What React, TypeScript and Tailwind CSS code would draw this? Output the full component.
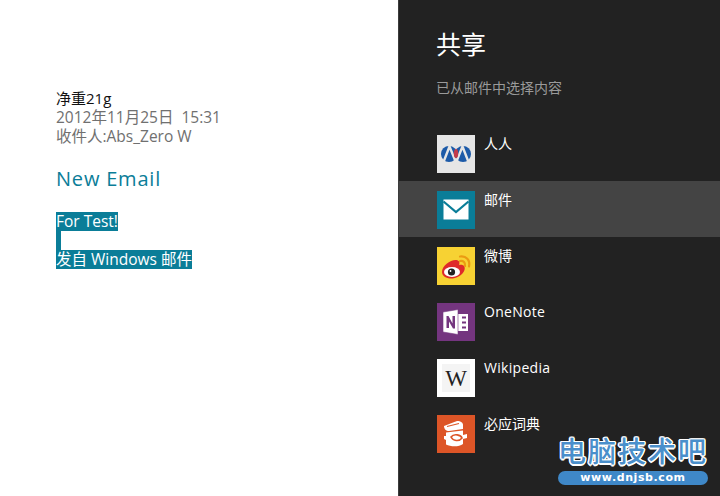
const cjk = "font-['Open_Sans','Noto_Sans_CJK_SC',sans-serif]";

function Renren() {
  return (
    <svg viewBox="0 0 38 38" className="w-full h-full">
      <rect width="38" height="38" fill="#e6e6e6" />
      <circle cx="12" cy="19" r="8" fill="#1c5aa8" />
      <circle cx="26" cy="19" r="8" fill="#1c5aa8" />
      <path d="M12.5 11.5 L6.5 27 M12.5 11.5 L19 27.5 M25.5 11.5 L19 27.5 M25.5 11.5 L31.5 27" stroke="#e6e6e6" strokeWidth="2.4" fill="none" />
      <ellipse cx="19" cy="18.5" rx="2.2" ry="4.5" fill="#c23a4a" />
    </svg>
  );
}
function Mail() {
  return (
    <svg viewBox="0 0 38 38" className="w-full h-full">
      <rect width="38" height="38" fill="#0a7d98" />
      <rect x="6.5" y="8.5" width="25" height="20" fill="#fff" />
      <path d="M6.5 10.5 L19 21 L31.5 10.5" stroke="#0a7d98" strokeWidth="2.2" fill="none" />
    </svg>
  );
}
function Weibo() {
  return (
    <svg viewBox="0 0 38 38" className="w-full h-full">
      <rect width="38" height="38" fill="#f7d233" />
      <path d="M5 25 C5 19 13 13 18.5 13 C22.5 13 23 15.5 22 18 C26.5 17 28.5 19.5 27.5 23 C26 28.5 18 32 13 31.5 C8.5 31 5 28.5 5 25 Z" fill="#df2a2a" />
      <ellipse cx="15" cy="25" rx="8" ry="5" fill="#fff" />
      <circle cx="14.5" cy="25" r="3.6" fill="#222" />
      <circle cx="13.5" cy="24" r="0.9" fill="#fff" />
      <path d="M23 14 C26.5 13.5 28.5 15.5 28 19 M23 9.5 C29 8.5 33.5 13 32 19.5" stroke="#eb9b12" strokeWidth="2.2" fill="none" strokeLinecap="round" />
    </svg>
  );
}
function OneNote() {
  return (
    <svg viewBox="0 0 38 38" className="w-full h-full">
      <rect width="38" height="38" fill="#74357f" />
      <path d="M20 11 H31 V28 H20 Z" fill="#fff" />
      <path d="M25 14.5 H29 M25 19.5 H29 M25 24.5 H29" stroke="#74357f" strokeWidth="2" />
      <path d="M6 9 L21 6.5 L21 31.5 L6 29 Z" fill="#fff" stroke="#74357f" strokeWidth="0.6" />
      <path d="M9.5 25 V13 H11.5 L15.5 20.5 V13 H18 V25.5 H16 L12 18.5 V25 Z" fill="#74357f" />
    </svg>
  );
}
function Wiki() {
  return (
    <div className="w-full h-full bg-white flex items-center justify-center">
      <div className="w-[28px] h-[28px] bg-[#f4f4f4] flex items-center justify-center text-[23px] leading-none text-[#222] font-['Liberation_Serif',serif]">
        W
      </div>
    </div>
  );
}
function Bing() {
  return (
    <svg viewBox="0 0 38 38" className="w-full h-full">
      <rect width="38" height="38" fill="#dd5527" />
      <path d="M7 11 L20 6 C24 6 26 8 26 10 L26 14 L12 16 C9 16 7 14 7 11 Z" fill="#fff" />
      <path d="M9 17.5 L26 15.5 L26 20 L30 19 L30 23 L26 24 L26 29 C22 32 14 32 9 29.5 L9 25 L7 24 L7 21 L9 21 Z" fill="#fff" />
      <path d="M14 22 C17 18 24 20 25 23 C22 27 16 26 14 22 Z" stroke="#dd5527" strokeWidth="1.6" fill="none" />
      <path d="M10 11.5 L22 8.5" stroke="#dd5527" strokeWidth="1.2" />
    </svg>
  );
}

const rows: { name: string; icon: React.ReactNode; active?: boolean; latin?: boolean }[] = [
  { name: "人人", icon: <Renren /> },
  { name: "邮件", icon: <Mail />, active: true },
  { name: "微博", icon: <Weibo /> },
  { name: "OneNote", icon: <OneNote />, latin: true },
  { name: "Wikipedia", icon: <Wiki />, latin: true },
  { name: "必应词典", icon: <Bing /> },
];

export default function App() {
  return (
    <div className={`relative w-[720px] h-[496px] overflow-hidden flex bg-white ${cjk}`}>
      <div className="w-[398px] shrink-0 pl-[56px] pt-[89px]">
        <div className="text-[15px] leading-[19px] text-[#111]">净重21g</div>
        <div className="text-[15.5px] leading-[19px] text-[#707070] whitespace-pre">2012年11月25日  15:31</div>
        <div className="text-[15.5px] leading-[19px] text-[#707070]">收件人:Abs_Zero W</div>
        <div className="mt-[19px] text-[20px] leading-[28px] tracking-[0.8px] text-[#0a7d98]">New Email</div>
        <div className="mt-[19px] text-[15.5px] leading-[19px] text-white">
          <div><span className="inline-block bg-[#0a7d98] h-[19px]">For Test!</span></div>
          <div className="w-[5px] h-[19px] bg-[#0a7d98]" />
          <div><span className="inline-block bg-[#0a7d98] h-[19px]">发自 Windows 邮件</span></div>
        </div>
      </div>
      <div className="flex-1 bg-[#222222] border-l border-[#3c3c3c] pt-[27px]">
        <div className="pl-[37px] text-[25px] leading-[34px] text-white">共享</div>
        <div className="pl-[37px] mt-[17px] text-[14px] leading-[20px] text-[#9a9a9a]">已从邮件中选择内容</div>
        <div className="mt-[27px] flex flex-col">
          {rows.map((r) => (
            <div key={r.name} className={`h-[56px] pl-[38px] pt-[10px] flex gap-[9px] ${r.active ? "bg-[#444444]" : ""}`}>
              <div className="w-[38px] h-[38px] shrink-0">{r.icon}</div>
              <div className={`-mt-[1px] text-[14px] leading-[20px] text-white ${r.latin ? "tracking-[0.3px]" : ""}`}>{r.name}</div>
            </div>
          ))}
        </div>
      </div>
      <div className="absolute left-[558px] top-[435px] w-[150px] flex flex-col items-center">
        <div className="text-[28px] leading-[32px] font-medium tracking-[2px] whitespace-nowrap text-[#4a8fcb] [text-shadow:1.5px_0_0_#fff,-1.5px_0_0_#fff,0_1.5px_0_#fff,0_-1.5px_0_#fff,1px_1px_0_#fff,-1px_1px_0_#fff,1px_-1px_0_#fff,-1px_-1px_0_#fff]">电脑技术吧</div>
        <div className="mt-[4px] w-[150px] h-[14px] rounded-full bg-[#3f88c8] text-white text-[11px] leading-[14px] font-bold text-center tracking-[0.6px] font-['DejaVu_Sans',sans-serif]">www.dnjsb.com</div>
      </div>
    </div>
  );
}
